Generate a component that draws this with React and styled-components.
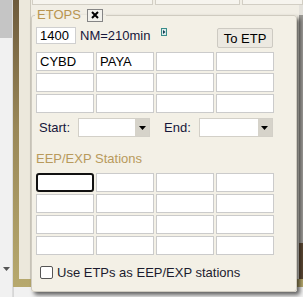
import React from 'react';
import styled, { createGlobalStyle } from 'styled-components';

const Global = createGlobalStyle`
  html, body { margin: 0; padding: 0; }
  body {
    width: 303px; height: 297px; overflow: hidden;
    font-family: "Liberation Sans", Arial, sans-serif;
    font-size: 13px;
    background: #f1f1f1;
  }
`;

const Page = styled.div`
  position: relative;
  width: 303px;
  height: 297px;
  display: flex;
  overflow: hidden;
`;

/* ---------- background application ---------- */
const SidePanel = styled.div`
  width: 13px;
  flex: none;
  box-sizing: border-box;
  border-right: 1px solid #dcdcdc;
  display: flex;
  flex-direction: column;
`;
const SideHead = styled.div`
  height: 38px;
  background: #c5c5c5;
`;
const SideBody = styled.div`
  flex: 1;
  background: #f1f1f1;
  display: flex;
  flex-direction: column;
  justify-content: flex-end;
  align-items: flex-start;
  padding: 0 0 26px 3px;
`;
const Frame = styled.div`
  flex: 1;
  display: flex;
  flex-direction: column;
  min-width: 0;
`;
const FrameBox = styled.div`
  height: 287px;
  box-sizing: border-box;
  padding: 0 0 8px 6px;
  background: linear-gradient(#6e5b3c, #9a8858 45%, #b7a96e);
  display: flex;
`;
const InnerPanel = styled.div`
  flex: 1;
  display: flex;
  background: #ece8dc;
`;
const Gutter = styled.div`
  width: 11px;
  flex: none;
`;
const Content = styled.div`
  flex: 1;
  border-left: 1px solid #cdc9bd;
  background: #f1eee5;
  display: flex;
  flex-direction: column;
`;
const TopCells = styled.div`
  height: 5px;
  display: flex;
  gap: 2px;
  padding-left: 1px;
`;
const TopCell = styled.div`
  width: ${p => p.$w}px;
  flex: ${p => (p.$w ? 'none' : '1')};
  box-sizing: border-box;
  border: 1px solid #d2cec4;
  border-top: none;
  background: #f6f4ee;
`;
const Body = styled.div`
  flex: 1;
  display: flex;
  justify-content: flex-end;
`;
const RightStrip = styled.div`
  width: 4px;
  display: flex;
  flex-direction: column;
`;
const StripPart = styled.div`
  height: ${p => p.$h}px;
  flex: ${p => (p.$h ? 'none' : '1')};
  background: ${p => p.$bg};
`;
const BottomRow = styled.div`
  flex: 1;
  background: #f1f1f1;
  border-left: 1px solid #d6d6d6;
`;

/* ---------- ETOPS popup ---------- */
const Popup = styled.fieldset`
  position: absolute;
  left: 31px;
  top: 8px;
  width: 266px;
  height: 284px;
  box-sizing: border-box;
  margin: 0;
  padding: 5px 22px 0 4px;
  min-width: 0;
  border: 1px solid #cfcbc0;
  border-radius: 3px;
  background: #f3f0e6;
  box-shadow: 3px 3px 4px rgba(0, 0, 0, 0.6);
  font: 13px/15px "Liberation Sans", Arial, sans-serif;
  color: #16163a;
`;
const Legend = styled.legend`
  display: flex;
  align-items: center;
  gap: 6px;
  height: 14px;
  margin-left: -1px;
  padding: 0 3px 0 2px;
  line-height: 14px;
  color: #b99550;
`;
const CloseBox = styled.span`
  width: 16px;
  height: 13px;
  box-sizing: border-box;
  border: 1px solid #858585;
  background: #f2f1ec;
  display: flex;
  align-items: center;
  justify-content: center;
`;
const TopRow = styled.div`
  display: flex;
  align-items: flex-start;
  height: 21px;
`;
const DistInput = styled.input`
  width: 40px;
  height: 17px;
  box-sizing: border-box;
  margin: 0;
  padding: 0 0 0 3px;
  border: 1px solid #cfcfcf;
  background: #fff;
  font: 13px/15px "Liberation Sans", Arial, sans-serif;
  color: #000;
  outline: none;
`;
const NmText = styled.span`
  margin-left: 4px;
  line-height: 17px;
`;
const InfoIcon = styled.svg`
  margin: 1px 0 0 11px;
  flex: none;
`;
const EtpButton = styled.button`
  margin: 1px 1px 0 auto;
  width: 56px;
  height: 20px;
  box-sizing: border-box;
  padding: 0;
  border: 1px solid #cdcac2;
  border-radius: 2px;
  background: #ece9e1;
  font: 13px/15px "Liberation Sans", Arial, sans-serif;
  color: #000;
`;
const Grid = styled.div`
  display: grid;
  grid-template-columns: repeat(4, 58px);
  grid-auto-rows: 19px;
  gap: 2px;
  margin-top: ${p => p.$mt}px;
`;
const Cell = styled.input`
  width: 58px;
  height: 19px;
  box-sizing: border-box;
  margin: 0;
  padding: 0 0 0 ${p => (p.$focused ? 2 : 3)}px;
  border: ${p => (p.$focused ? '2px solid #111' : '1px solid #cbcbcb')};
  border-radius: ${p => (p.$focused ? 3 : 0)}px;
  background: #fff;
  font: 13px/15px "Liberation Sans", Arial, sans-serif;
  color: #000;
  outline: none;
`;
const SelectRow = styled.div`
  display: flex;
  align-items: center;
  height: 19px;
  margin-top: 5px;
`;
const FieldLabel = styled.span`
  margin-left: ${p => p.$ml}px;
`;
const SelectBox = styled.div`
  width: ${p => p.$w}px;
  height: 19px;
  margin-left: 8px;
  box-sizing: border-box;
  border: 1px solid #d3d0c8;
  background: #fff;
  display: flex;
  justify-content: flex-end;
`;
const SelectArrow = styled.div`
  width: 14px;
  background: #d6d3ca;
  display: flex;
  align-items: center;
  justify-content: center;
`;
const Heading = styled.div`
  margin-top: 14px;
  color: #b89a5c;
`;
const CheckRow = styled.label`
  display: flex;
  align-items: center;
  height: 15px;
  margin-top: 10px;
`;
const Check = styled.input`
  appearance: none;
  width: 13px;
  height: 13px;
  margin: 0 0 0 4px;
  box-sizing: border-box;
  border: 1px solid #555;
  border-radius: 2px;
  background: #fff;
`;
const CheckText = styled.span`
  margin-left: 4px;
  color: #1c1c2e;
`;

const DownArrow = ({ color = '#000' }) => (
  <svg width="7" height="4" viewBox="0 0 7 4">
    <path d="M0 0 H7 L3.5 4 Z" fill={color} />
  </svg>
);

const Select = ({ w }) => (
  <SelectBox $w={w}>
    <SelectArrow>
      <DownArrow />
    </SelectArrow>
  </SelectBox>
);

const topCells = ['CYBD', 'PAYA', '', '', '', '', '', '', '', '', '', ''];
const eepCells = Array.from({ length: 16 }, () => '');

export default function App() {
  return (
    <Page>
      <Global />
      <SidePanel>
        <SideHead />
        <SideBody>
          <DownArrow color="#555" />
        </SideBody>
      </SidePanel>
      <Frame>
        <FrameBox>
          <InnerPanel>
            <Gutter />
            <Content>
              <TopCells>
                <TopCell $w={121} />
                <TopCell $w={85} />
                <TopCell />
              </TopCells>
              <Body>
                <RightStrip>
                  <StripPart $h={10} $bg="#e4e2dc" />
                  <StripPart $h={228} $bg="#9a9894" />
                  <StripPart $h={36} $bg="#5a4632" />
                  <StripPart $bg="#6e6a64" />
                </RightStrip>
              </Body>
            </Content>
          </InnerPanel>
        </FrameBox>
        <BottomRow />
      </Frame>

      <Popup>
        <Legend>
          ETOPS
          <CloseBox>
            <svg width="8" height="8" viewBox="0 0 8 8">
              <path d="M1 1 L7 7 M7 1 L1 7" stroke="#000" strokeWidth="2" />
            </svg>
          </CloseBox>
        </Legend>
        <TopRow>
          <DistInput defaultValue="1400" />
          <NmText>NM=210min</NmText>
          <InfoIcon width="6" height="8" viewBox="0 0 6 8">
            <rect x="0.5" y="0.5" width="5" height="7" fill="#dcebea" stroke="#3a8c8a" />
            <path d="M2 2 L4.5 4 L2 6 Z" fill="#123a52" />
          </InfoIcon>
          <EtpButton>To ETP</EtpButton>
        </TopRow>
        <Grid $mt={4}>
          {topCells.map((v, i) => (
            <Cell key={i} defaultValue={v} />
          ))}
        </Grid>
        <SelectRow>
          <FieldLabel $ml={3}>Start:</FieldLabel>
          <Select w={72} />
          <FieldLabel $ml={14}>End:</FieldLabel>
          <Select w={74} />
        </SelectRow>
        <Heading>EEP/EXP Stations</Heading>
        <Grid $mt={7}>
          {eepCells.map((v, i) => (
            <Cell key={i} defaultValue={v} $focused={i === 0} />
          ))}
        </Grid>
        <CheckRow>
          <Check type="checkbox" />
          <CheckText>Use ETPs as EEP/EXP stations</CheckText>
        </CheckRow>
      </Popup>
    </Page>
  );
}
